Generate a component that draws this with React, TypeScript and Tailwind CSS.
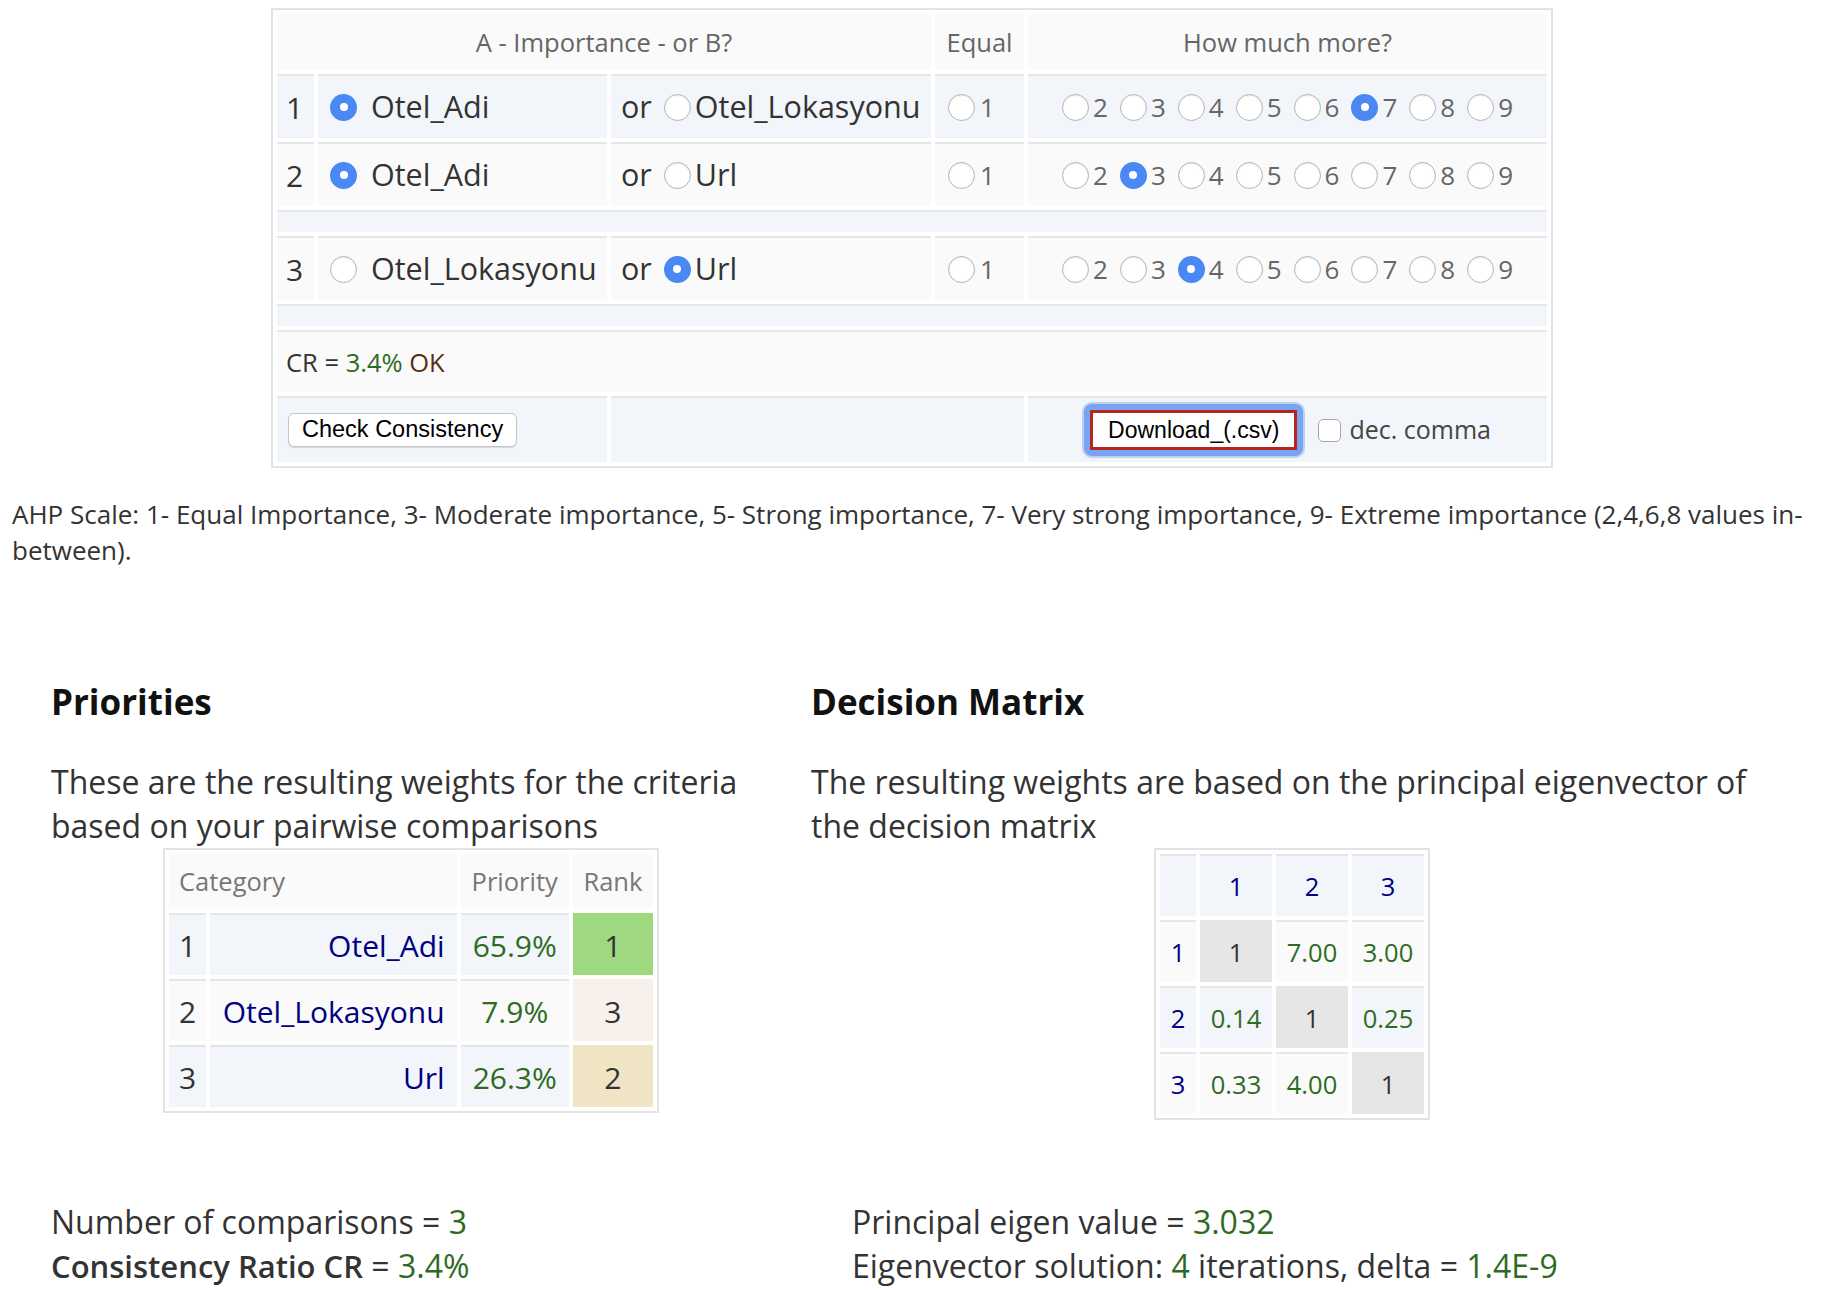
import React from 'react';

const green = 'text-[#2f6b1f]';
const navy = 'text-[#000080]';

function Radio({ checked, className = '' }: { checked?: boolean; className?: string }) {
  if (checked) {
    return (
      <span className={`flex w-[27px] h-[27px] shrink-0 items-center justify-center rounded-full bg-[#4a88f4] ${className}`}>
        <span className="w-[8px] h-[8px] rounded-full bg-white" />
      </span>
    );
  }
  return (
    <span className={`block w-[27px] h-[27px] shrink-0 rounded-full border border-[#b3b3b3] bg-white shadow-[inset_0_1px_2px_rgba(0,0,0,0.08)] ${className}`} />
  );
}

type Pair = { n: number; a: string; b: string; pick: 'a' | 'b'; level: number };

const pairs: Pair[] = [
  { n: 1, a: 'Otel_Adi', b: 'Otel_Lokasyonu', pick: 'a', level: 7 },
  { n: 2, a: 'Otel_Adi', b: 'Url', pick: 'a', level: 3 },
  { n: 3, a: 'Otel_Lokasyonu', b: 'Url', pick: 'b', level: 4 },
];

const cellTop = 'border-t-2 border-[#e6e6e6]';

function PairRow({ p, stripe }: { p: Pair; stripe: string }) {
  return (
    <tr className={`h-[64px] ${stripe}`}>
      <td className={`${cellTop} pl-[9px] text-[30px] text-[#333]`}>{p.n}</td>
      <td className={`${cellTop} pl-[12px]`}>
        <div className="flex items-center text-[30.5px] text-[#333]">
          <Radio checked={p.pick === 'a'} />
          <span className="ml-[14px]">{p.a}</span>
        </div>
      </td>
      <td className={`${cellTop} pl-[10px]`}>
        <div className="flex items-center text-[30.5px] text-[#333]">
          <span>or</span>
          <Radio checked={p.pick === 'b'} className="ml-[12px]" />
          <span className="ml-[4px]">{p.b}</span>
        </div>
      </td>
      <td className={`${cellTop} pl-[13px]`}>
        <div className="flex items-center text-[26px] text-[#666]">
          <Radio />
          <span className="ml-[5px]">1</span>
        </div>
      </td>
      <td className={cellTop}>
        <div className="flex items-center justify-center gap-[12px] text-[26px] text-[#666]">
          {[2, 3, 4, 5, 6, 7, 8, 9].map((v) => (
            <span key={v} className="flex items-center">
              <Radio checked={v === p.level} />
              <span className="ml-[4px]">{v}</span>
            </span>
          ))}
        </div>
      </td>
    </tr>
  );
}

function BlankRow() {
  return (
    <tr className="h-[22px] bg-[#f2f5fa]">
      <td colSpan={5} className={cellTop} />
    </tr>
  );
}

const priorities = [
  { n: 1, name: 'Otel_Adi', pct: '65.9%', rank: 1, bg: 'bg-[#9fd97f]', stripe: 'bg-[#f2f5fa]' },
  { n: 2, name: 'Otel_Lokasyonu', pct: '7.9%', rank: 3, bg: 'bg-[#f7f0eb]', stripe: 'bg-[#fafafa]' },
  { n: 3, name: 'Url', pct: '26.3%', rank: 2, bg: 'bg-[#efe5c5]', stripe: 'bg-[#f2f5fa]' },
];

const matrix = [
  ['1', '7.00', '3.00'],
  ['0.14', '1', '0.25'],
  ['0.33', '4.00', '1'],
];

export default function App() {
  return (
    <div className="min-h-screen w-full bg-white font-['Open_Sans',sans-serif] text-[#333]">
      {/* --- PAIRWISE COMPARISON --- */}
      <div className="pt-[8px] pl-[271px]">
        <table className="w-[1281px] table-fixed border-separate border-spacing-[4px] border-2 border-[#e3e3e3]">
          <colgroup>
            <col className="w-[37px]" />
            <col className="w-[289px]" />
            <col className="w-[320px]" />
            <col className="w-[89px]" />
            <col className="w-[519px]" />
          </colgroup>
          <thead>
            <tr className="h-[56px] bg-[#fafafa] text-[25.5px] font-normal text-[#666]">
              <th colSpan={3} className="font-normal">A - Importance - or B?</th>
              <th className="font-normal">Equal</th>
              <th className="font-normal">How much more?</th>
            </tr>
          </thead>
          <tbody>
            <PairRow p={pairs[0]} stripe="bg-[#f2f5fa]" />
            <PairRow p={pairs[1]} stripe="bg-[#fafafa]" />
            <BlankRow />
            <PairRow p={pairs[2]} stripe="bg-[#fafafa]" />
            <BlankRow />
            <tr className="h-[62px] bg-[#fafafa]">
              <td colSpan={5} className={`${cellTop} pl-[9px] text-[25.5px] text-[#333]`}>
                CR = <span className={green}>3.4%</span> <span className="text-[#5a2e12]">OK</span>
              </td>
            </tr>
            <tr className="h-[66px] bg-[#f2f5fa]">
              <td colSpan={2} className={`${cellTop} pl-[11px]`}>
                <button className="h-[34px] rounded-[6px] border border-[#c4c4c4] bg-white px-[13px] font-['Liberation_Sans',Arial,sans-serif] text-[23.5px] leading-none text-black shadow-[0_1px_1px_rgba(0,0,0,0.12)]">
                  Check Consistency
                </button>
              </td>
              <td colSpan={2} className={cellTop} />
              <td className={cellTop}>
                <div className="flex items-center justify-center">
                  <span className="rounded-[8px] bg-[#7aa3f2] p-[6px] shadow-[0_0_0_2px_#bcd0f7]">
                    <span className="flex h-[40px] items-center border-[3px] border-[#b3261e] bg-white px-[15px] font-['Liberation_Sans',Arial,sans-serif] text-[23px] text-black">
                      Download_(.csv)
                    </span>
                  </span>
                  <span className="ml-[15px] inline-block h-[23px] w-[23px] rounded-[5px] border border-[#a8a8a8] bg-white" />
                  <span className="ml-[8px] text-[25px] text-[#444]">dec. comma</span>
                </div>
              </td>
            </tr>
          </tbody>
        </table>
      </div>

      <p className="mt-[28px] px-[12px] text-[26px] leading-[36px] text-[#333]">
        AHP Scale: 1- Equal Importance, 3- Moderate importance, 5- Strong importance, 7- Very strong importance, 9- Extreme importance (2,4,6,8 values in-between).
      </p>

      {/* --- RESULTS --- */}
      <div className="mt-[113px] flex pl-[51px]">
        <div className="w-[720px] shrink-0">
          <h2 className="text-[35px] font-bold leading-[42px] text-[#111]">Priorities</h2>
          <p className="mt-[37px] text-[32px] leading-[44px] text-[#333]">
            These are the resulting weights for the criteria based on your pairwise comparisons
          </p>
          <div className="flex justify-center">
            <table className="w-[496px] table-fixed border-separate border-spacing-[4px] border-2 border-[#e3e3e3]">
              <colgroup>
                <col className="w-[37px]" />
                <col className="w-[246px]" />
                <col className="w-[108px]" />
                <col className="w-[80px]" />
              </colgroup>
              <thead>
                <tr className="h-[55px] bg-[#fafafa] text-[25.5px] text-[#777]">
                  <th colSpan={2} className="pl-[10px] text-left font-normal">Category</th>
                  <th className="font-normal">Priority</th>
                  <th className="font-normal">Rank</th>
                </tr>
              </thead>
              <tbody>
                {priorities.map((r) => (
                  <tr key={r.n} className={`h-[62px] ${r.stripe} text-[30px]`}>
                    <td className={`${cellTop} pl-[10px] text-[#333]`}>{r.n}</td>
                    <td className={`${cellTop} pr-[12px] text-right ${navy}`}>{r.name}</td>
                    <td className={`${cellTop} text-center ${green}`}>{r.pct}</td>
                    <td className={`border-t-2 border-transparent text-center text-[#333] ${r.bg}`}>{r.rank}</td>
                  </tr>
                ))}
              </tbody>
            </table>
          </div>
        </div>

        <div className="ml-[40px] w-[962px] shrink-0">
          <h2 className="text-[35px] font-bold leading-[42px] text-[#111]">Decision Matrix</h2>
          <p className="mt-[37px] text-[32px] leading-[44px] text-[#333]">
            The resulting weights are based on the principal eigenvector of the decision matrix
          </p>
          <div className="flex justify-center">
            <table className="w-[276px] table-fixed border-separate border-spacing-[4px] border-2 border-[#e3e3e3] text-[25.5px]">
              <colgroup>
                <col className="w-[36px]" />
                <col className="w-[72px]" />
                <col className="w-[72px]" />
                <col className="w-[72px]" />
              </colgroup>
              <tbody>
                <tr className="h-[62px] bg-[#f2f5fa]">
                  <td className={cellTop} />
                  {[1, 2, 3].map((c) => (
                    <td key={c} className={`${cellTop} text-center ${navy}`}>{c}</td>
                  ))}
                </tr>
                {matrix.map((row, i) => (
                  <tr key={i} className={`h-[62px] ${i % 2 === 0 ? 'bg-[#fafafa]' : 'bg-[#f2f5fa]'}`}>
                    <td className={`${cellTop} text-center ${navy}`}>{i + 1}</td>
                    {row.map((v, j) => (
                      <td
                        key={j}
                        className={
                          i === j
                            ? 'border-t-2 border-[#e6e6e6] bg-[#e6e6e6] text-center text-[#333]'
                            : `${cellTop} text-center ${green}`
                        }
                      >
                        {v}
                      </td>
                    ))}
                  </tr>
                ))}
              </tbody>
            </table>
          </div>
        </div>
      </div>

      {/* --- SUMMARY --- */}
      <div className="mt-[80px] flex pl-[51px] pb-[20px] text-[32px] leading-[44px] text-[#333]">
        <div className="w-[801px] shrink-0">
          <div>
            Number of comparisons = <span className={green}>3</span>
          </div>
          <div>
            <span className="text-[31px] font-semibold">Consistency Ratio CR</span> = <span className={green}>3.4%</span>
          </div>
        </div>
        <div>
          <div>
            Principal eigen value = <span className={green}>3.032</span>
          </div>
          <div>
            Eigenvector solution: <span className={green}>4</span> iterations, delta = <span className={green}>1.4E-9</span>
          </div>
        </div>
      </div>
    </div>
  );
}
